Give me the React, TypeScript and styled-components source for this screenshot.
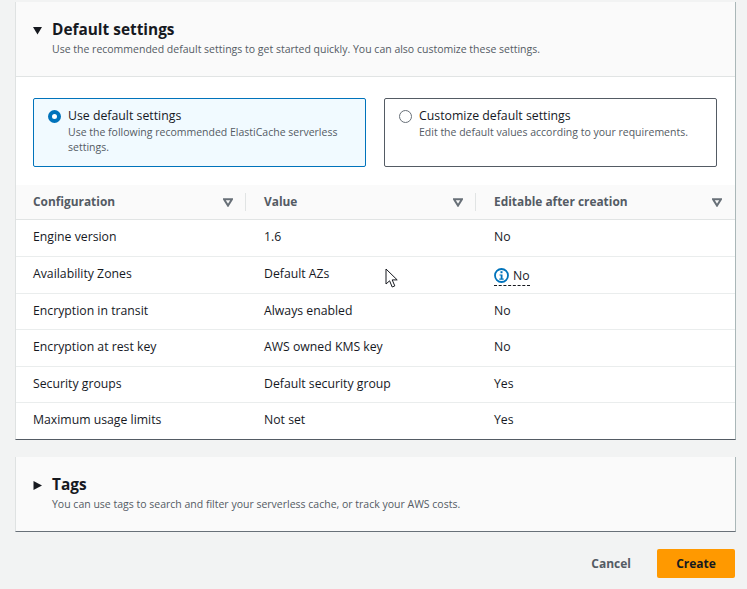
import React from "react"
import styled, { createGlobalStyle } from "styled-components"

const GlobalStyle = createGlobalStyle`
  html, body {
    margin: 0;
    padding: 0;
    background: #f2f3f3;
    overflow: hidden;
  }
  body {
    font-family: "Open Sans", "Liberation Sans", sans-serif;
    color: #16191f;
  }
`

const Page = styled.div`
  position: relative;
  width: 747px;
  height: 589px;
  box-sizing: border-box;
  padding: 2px 11px 0 15px;
  overflow: hidden;
`

const Card = styled.section`
  background: #fff;
  border-right: 1px solid #aab7b8;
  border-left: 1px solid #dfe2e2;
  border-bottom: 1px solid #545b64;
  box-sizing: border-box;
  width: 721px;
`

const CollapsedCard = styled(Card)`
  margin-top: 17px;
  height: 75px;
  background: #fafafa;
  border-bottom-color: #687078;
  padding: 18px 0 0 17px;
`

const Header = styled.header`
  height: 75px;
  box-sizing: border-box;
  background: #fafafa;
  border-bottom: 1px solid #e1e4e4;
  padding: 18px 0 0 17px;
`

const TitleRow = styled.div`
  display: flex;
  align-items: center;
  gap: 10px;
  height: 20px;
`

const Caret = styled.svg`
  width: 9px;
  height: 9px;
  fill: #16191f;
  flex: none;
`

const Title = styled.h2`
  margin: 0;
  font-size: 15.4px;
  line-height: 20px;
  font-weight: 700;
  color: #16191f;
`

const Description = styled.p`
  margin: 1px 0 0 19px;
  font-size: 10.5px;
  line-height: 16px;
  color: #545b64;
`

const Options = styled.div`
  display: grid;
  grid-template-columns: 333px 333px;
  column-gap: 18px;
  padding: 21px 0 18px 17px;
`

const Option = styled.div<{ $selected?: boolean }>`
  display: flex;
  gap: 7px;
  height: 69px;
  box-sizing: border-box;
  padding: 8px 14px 0 14px;
  border: 1px solid ${(p) => (p.$selected ? "#0073bb" : "#545b64")};
  border-radius: 2px;
  background: ${(p) => (p.$selected ? "#f1faff" : "#fff")};
`

const Radio = styled.span<{ $selected?: boolean }>`
  flex: none;
  width: 13px;
  height: 13px;
  margin-top: 3px;
  border-radius: 50%;
  box-sizing: border-box;
  background: #fff;
  border: ${(p) => (p.$selected ? "4px solid #0073bb" : "1px solid #687078")};
`

const OptionText = styled.div`
  display: flex;
  flex-direction: column;
`

const OptionLabel = styled.span`
  font-size: 12.3px;
  line-height: 18px;
  color: #16191f;
`

const OptionHint = styled.span`
  font-size: 10.5px;
  line-height: 15px;
  color: #545b64;
`

const Table = styled.div`
  display: grid;
  grid-template-columns: 230px 230px 259px;
`

const HeadCell = styled.div`
  position: relative;
  display: flex;
  align-items: center;
  justify-content: space-between;
  height: 35px;
  box-sizing: border-box;
  background: #fafafa;
  border-bottom: 1px solid #e1e4e4;
  padding: 0 13px 2px 18px;
  font-size: 11.9px;
  font-weight: 700;
  color: #545b64;

  &:first-child {
    padding-left: 17px;
  }

  &:nth-child(-n + 2)::after {
    content: "";
    position: absolute;
    right: 0;
    top: 8px;
    height: 18px;
    width: 1px;
    background: #e1e4e4;
  }
`

const SortIcon = styled.svg`
  width: 10px;
  height: 9px;
  margin-top: 3px;
  fill: none;
  stroke: #687078;
  stroke-width: 2;
  flex: none;
`

const BodyCell = styled.div<{ $last?: boolean; $h: number }>`
  display: flex;
  align-items: center;
  height: ${(p) => p.$h}px;
  box-sizing: border-box;
  padding: 0 0 3px 18px;
  font-size: 12.25px;
  color: #16191f;
  border-bottom: ${(p) => (p.$last ? "none" : "1px solid #eaeded")};

  &:nth-child(3n + 1) {
    padding-left: 17px;
  }
`

const InfoValue = styled.span`
  display: inline-flex;
  align-items: center;
  gap: 4px;
  height: 20px;
  margin-top: 4px;
  border-bottom: 1px dashed #16191f;
`

const Footer = styled.footer`
  display: flex;
  justify-content: flex-end;
  align-items: center;
  gap: 26px;
  width: 720px;
  margin-top: 17px;
`

const CancelButton = styled.button`
  border: none;
  background: none;
  padding: 0;
  font: 700 12px "Open Sans", "Liberation Sans", sans-serif;
  color: #545b64;
`

const CreateButton = styled.button`
  width: 78px;
  height: 29px;
  border: none;
  border-radius: 2px;
  background: #ff9900;
  font: 700 12px "Open Sans", "Liberation Sans", sans-serif;
  color: #16191f;
`

const Cursor = styled.svg`
  position: absolute;
  left: 385px;
  top: 268px;
  width: 14px;
  height: 21px;
`

const columns = ["Configuration", "Value", "Editable after creation"]

const rows = [
  { name: "Engine version", value: "1.6", editable: "No", h: 37 },
  { name: "Availability Zones", value: "Default AZs", editable: "No", info: true, h: 37 },
  { name: "Encryption in transit", value: "Always enabled", editable: "No", h: 36 },
  { name: "Encryption at rest key", value: "AWS owned KMS key", editable: "No", h: 37 },
  { name: "Security groups", value: "Default security group", editable: "Yes", h: 36 },
  { name: "Maximum usage limits", value: "Not set", editable: "Yes", h: 36 },
]

function InfoIcon() {
  return (
    <svg width="15" height="15" viewBox="0 0 15 15">
      <circle cx="7.5" cy="7.5" r="6.5" fill="none" stroke="#0073bb" strokeWidth="1.8" />
      <rect x="6.5" y="3.2" width="2" height="2" fill="#0073bb" />
      <path d="M5.5 6.4h3v4.2h1.2v1.2H5.3v-1.2h1.4V7.6H5.5z" fill="#0073bb" />
    </svg>
  )
}

export default function App() {
  return (
    <Page>
      <GlobalStyle />
      <Card>
        <Header>
          <TitleRow>
            <Caret viewBox="0 0 9 9">
              <path d="M0 1h9L4.5 8.5z" />
            </Caret>
            <Title>Default settings</Title>
          </TitleRow>
          <Description>
            Use the recommended default settings to get started quickly. You can also customize these settings.
          </Description>
        </Header>
        <Options>
          <Option $selected>
            <Radio $selected />
            <OptionText>
              <OptionLabel>Use default settings</OptionLabel>
              <OptionHint>Use the following recommended ElastiCache serverless settings.</OptionHint>
            </OptionText>
          </Option>
          <Option>
            <Radio />
            <OptionText>
              <OptionLabel>Customize default settings</OptionLabel>
              <OptionHint>Edit the default values according to your requirements.</OptionHint>
            </OptionText>
          </Option>
        </Options>
        <Table>
          {columns.map((c) => (
            <HeadCell key={c}>
              {c}
              <SortIcon viewBox="0 0 10 9">
                <path d="M1 1.2h8L5 7.6z" />
              </SortIcon>
            </HeadCell>
          ))}
          {rows.map((r, i) => {
            const last = i === rows.length - 1
            return (
              <React.Fragment key={r.name}>
                <BodyCell $h={r.h} $last={last}>{r.name}</BodyCell>
                <BodyCell $h={r.h} $last={last}>{r.value}</BodyCell>
                <BodyCell $h={r.h} $last={last}>
                  {r.info ? (
                    <InfoValue>
                      <InfoIcon />
                      {r.editable}
                    </InfoValue>
                  ) : (
                    r.editable
                  )}
                </BodyCell>
              </React.Fragment>
            )
          })}
        </Table>
      </Card>
      <CollapsedCard>
        <TitleRow>
          <Caret viewBox="0 0 9 9">
            <path d="M0.5 0l8.5 4.5L0.5 9z" />
          </Caret>
          <Title>Tags</Title>
        </TitleRow>
        <Description>
          You can use tags to search and filter your serverless cache, or track your AWS costs.
        </Description>
      </CollapsedCard>
      <Footer>
        <CancelButton>Cancel</CancelButton>
        <CreateButton>Create</CreateButton>
      </Footer>
      <Cursor viewBox="0 0 14 21">
        <path d="M1 1v15l3.6-3.2 2.6 6.2 2.6-1.1-2.6-6h5z" fill="#fff" stroke="#16191f" strokeWidth="1" strokeLinejoin="miter" />
      </Cursor>
    </Page>
  )
}
